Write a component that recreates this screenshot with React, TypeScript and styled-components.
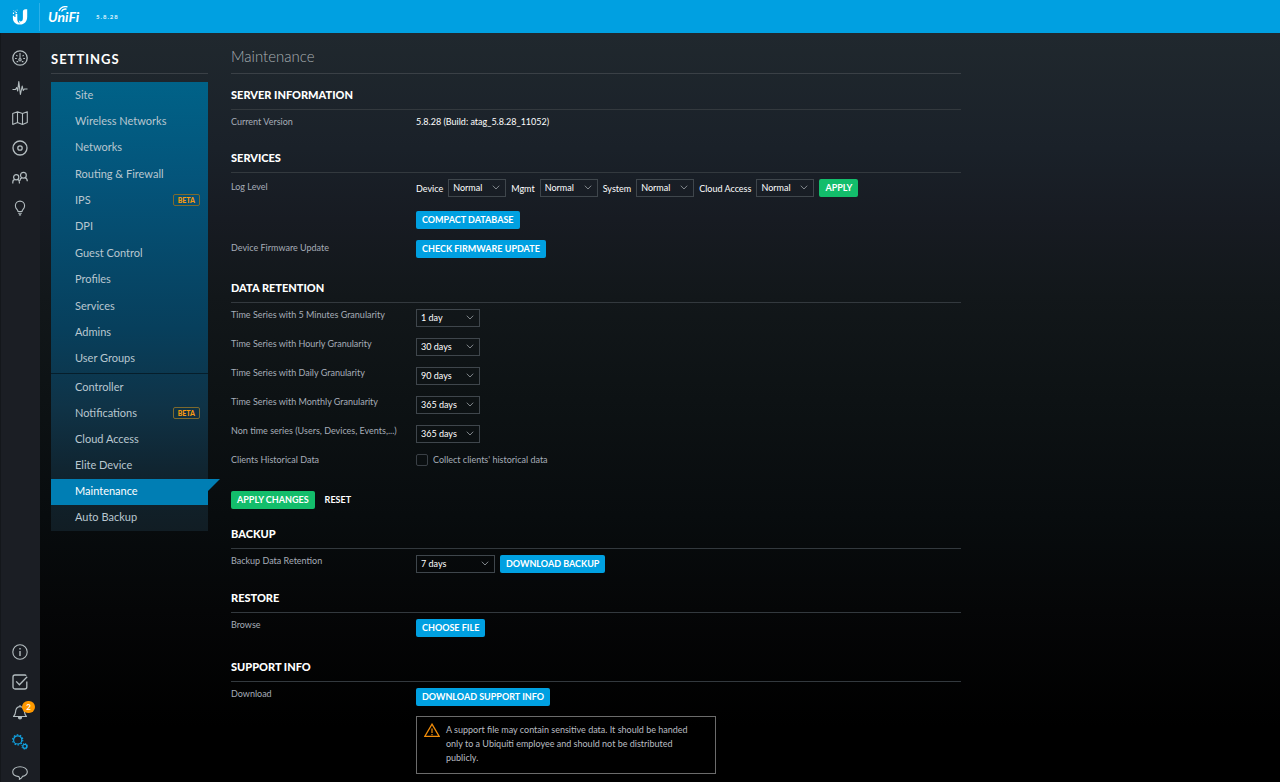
import React, { useState } from "react";
import styled, { createGlobalStyle, css } from "styled-components";

const GlobalStyle = createGlobalStyle`
  *, *::before, *::after { box-sizing: border-box; }
  html { background: #000; }
  body {
    margin: 0;
    color: #fff;
    font-family: Lato, "Open Sans", sans-serif;
    font-size: 9px;
    line-height: 12px;
  }
  h1, h2, p, ul { margin: 0; padding: 0; }
  ul { list-style: none; }
  button, select, input { font: inherit; color: inherit; margin: 0; }
`;

const Page = styled.div`
  display: flex;
  flex-direction: column;
  min-height: 100vh;
  background: linear-gradient(
    #20282e 33px,
    #1a2129 19%,
    #171b22 28%,
    #12171a 38%,
    #0d1214 51%,
    #080c0e 66%,
    #050607 78%,
    #000 93%
  );
`;

const TopBar = styled.header`
  display: flex;
  align-items: center;
  height: 33px;
  background: #00a0e1;
`;

const BrandLink = styled.a`
  display: flex;
  align-items: center;
  justify-content: center;
  width: 40px;
  height: 28px;
  border-right: 1px solid #2bb0e8;
`;

const ProductLogo = styled.svg`
  margin-left: 8px;
`;

const Version = styled.span`
  margin-left: 14px;
  font-size: 6px;
  font-weight: 900;
  letter-spacing: 1px;
  color: #d2edfa;
`;

const Body = styled.div`
  display: flex;
  flex: 1;
`;

const Rail = styled.nav`
  display: flex;
  flex-direction: column;
  justify-content: space-between;
  flex: none;
  width: 40px;
  padding-top: 15px;
  background: #1b1e24;
  box-shadow: inset 1px 0 #14171b;
`;

const RailGroup = styled.div`
  display: flex;
  flex-direction: column;
  align-items: center;
  gap: 10px;
`;

const RailButton = styled.button<{ $active?: boolean }>`
  position: relative;
  display: flex;
  align-items: center;
  justify-content: center;
  width: 30px;
  height: 20px;
  padding: 0;
  border: 0;
  background: none;
  color: ${(p) => (p.$active ? "#12a4e4" : "#b4bdc0")};
  cursor: pointer;
`;

const Badge = styled.span`
  position: absolute;
  top: -1px;
  right: 0;
  width: 13px;
  height: 12px;
  border-radius: 6px;
  background: #f90;
  color: #fff;
  font-size: 8px;
  font-weight: 700;
  line-height: 12px;
  text-align: center;
`;

const SettingsPanel = styled.aside`
  flex: none;
  width: 157px;
  margin: 0 23px 0 11px;
`;

const PanelTitle = styled.h2`
  height: 41px;
  margin-bottom: 8px;
  padding-top: 18px;
  border-bottom: 1px solid #3a4046;
  font-size: 13px;
  font-weight: 700;
  line-height: 16px;
  letter-spacing: 1px;
`;

const Menu = styled.div`
  display: flex;
  flex-direction: column;
  gap: 1px;
  background: linear-gradient(#006288, #04547a 22%, #073f5c 55%, #0f3347 72%, #10232e 88%, #111d24);
`;

const MenuGroup = styled.ul<{ $height: number }>`
  display: flex;
  flex-direction: column;
  height: ${(p) => p.$height}px;

  & + & {
    border-top: 1px solid #061e2b;
  }
`;

const MenuItem = styled.li`
  flex: 1;
  display: flex;
`;

const MenuLink = styled.a<{ $active: boolean }>`
  position: relative;
  flex: 1;
  display: flex;
  align-items: center;
  justify-content: space-between;
  padding: 0 8px 1px 24px;
  font-size: 11px;
  line-height: 14px;
  color: #b9c7d0;
  text-decoration: none;

  ${(p) =>
    p.$active &&
    css`
      background: #007eb4;
      color: #fff;

      &::after {
        content: "";
        position: absolute;
        top: 0;
        left: 100%;
        border-top: 12px solid #007eb4;
        border-right: 12px solid transparent;
      }
    `}
`;

const Beta = styled.span`
  padding: 0 4px;
  border: 1px solid #7d6a2e;
  border-radius: 2px;
  font-size: 7px;
  font-weight: 900;
  line-height: 10px;
  color: #f79a10;
`;

const Content = styled.main`
  flex: 1;
  max-width: 730px;
  padding-bottom: 8px;
`;

const Title = styled.h1`
  height: 41px;
  margin-bottom: 13px;
  padding-top: 13px;
  border-bottom: 1px solid #3a4046;
  font-size: 15px;
  font-weight: 300;
  line-height: 20px;
  color: #a9b0b3;
`;

const Section = styled.section<{ $gap?: number }>`
  margin-bottom: ${(p) => p.$gap ?? 22}px;
`;

const SectionTitle = styled.h2`
  padding-bottom: 6px;
  border-bottom: 1px solid #33393e;
  font-size: 11px;
  font-weight: 900;
  line-height: 16px;
`;

const Rows = styled.div`
  display: grid;
  row-gap: 11px;
  padding-top: 6px;
`;

const Row = styled.div`
  display: grid;
  grid-template-columns: 185px 1fr;
  align-items: start;
`;

const RowLabel = styled.label<{ $lowered?: boolean }>`
  padding-top: ${(p) => (p.$lowered ? 2 : 0)}px;
  color: #a6adb8;
`;

const Controls = styled.div`
  display: flex;
  align-items: center;
  gap: 5px;
`;

const Stack = styled.div`
  display: grid;
  justify-items: start;
  row-gap: 14px;
`;

const InlineLabel = styled.label`
  padding-top: 1px;
`;

const SelectBox = styled.span<{ $width: number }>`
  position: relative;
  display: block;
  width: ${(p) => p.$width}px;
  height: 18px;

  svg {
    position: absolute;
    top: 6px;
    right: 6px;
    pointer-events: none;
  }
`;

const NativeSelect = styled.select`
  appearance: none;
  display: block;
  width: 100%;
  height: 100%;
  padding: 0 16px 1px 4px;
  border: 1px solid #3f464c;
  border-radius: 0;
  background: transparent;
  outline: none;

  option { background: #171c21; }
`;

const Button = styled.button<{ $tone?: "blue" | "green" | "plain" }>`
  height: 18px;
  padding: 0 6px;
  border: 0;
  border-radius: 2px;
  background: ${(p) =>
    p.$tone === "green" ? "#13bd6b" : p.$tone === "plain" ? "none" : "#00a0e1"};
  color: #fff;
  font-size: 9px;
  font-weight: 700;
  line-height: 16px;
  white-space: nowrap;
  cursor: pointer;
`;

const Check = styled.label`
  display: flex;
  align-items: center;
  gap: 5px;
  color: #a6adb8;
`;

const CheckInput = styled.input`
  appearance: none;
  width: 12px;
  height: 12px;
  border: 1px solid #3a4046;
  border-radius: 2px;
`;

const FormActions = styled.div`
  display: flex;
  gap: 4px;
  padding-top: 25px;
`;

const Notice = styled.div`
  display: flex;
  gap: 6px;
  width: 300px;
  margin-top: 10px;
  padding: 6px 12px 8px 7px;
  border: 1px solid #6b6b6b;
  line-height: 14px;
  color: #b9bdc2;

  svg { flex: none; }
`;

const icon = {
  width: 16,
  height: 16,
  viewBox: "0 0 16 16",
  fill: "none",
  stroke: "currentColor",
  strokeWidth: 1.1,
  "aria-hidden": true,
} as const;

const GaugeIcon = () => (
  <svg {...icon}>
    <circle cx="8" cy="8" r="7.2" strokeWidth={1.3} />
    <circle cx="8" cy="9.8" r="1.2" />
    <path d="M8 8.6V3M3 8.5h1.8M11.2 8.5H13M4.3 5.2l1.2.9M11.7 5.2l-1.2.9M4.6 11.6h1.6M9.8 11.6h1.6" />
  </svg>
);

const PulseIcon = () => (
  <svg {...icon} strokeLinejoin="round">
    <path d="M.5 9.5h3l1.2-2 1 3.5L6.8 1.5l1.6 13L10.2 6l1 4.5L12.400 9h3.100" />
  </svg>
);

const MapIcon = () => (
  <svg {...icon} strokeLinejoin="round">
    <path d="M.7 3.4 5.5 1.8l5 1.8 4.8-1.8v10.800l-4.800 1.800-5-1.800-4.800 1.800zM5.500 1.800v10.800M10.500 3.600v10.800" />
  </svg>
);

const DeviceIcon = () => (
  <svg {...icon} strokeWidth={1.3}>
    <circle cx="8" cy="8" r="7" />
    <circle cx="8" cy="8" r="2.2" />
  </svg>
);

const ClientsIcon = () => (
  <svg {...icon} strokeWidth={1.2}>
    <circle cx="4.2" cy="7.2" r="2.6" />
    <circle cx="11.4" cy="5.2" r="2.9" />
    <path d="M.8 13.4v-1.2c0-1.6 1-2.6 2.2-2.8M5.6 9.4c1 .3 1.8 1.2 1.8 2.8v1.2M8 10.8c0-1.6.8-2.8 2-3.2M12.9 7.6c1.5.4 2.4 1.6 2.4 3.6" />
  </svg>
);

const BulbIcon = () => (
  <svg {...icon}>
    <path d="M6 11.5C6 9.5 3.4 9 3.4 5.7a4.6 4.6 0 0 1 9.2 0C12.6 9 10 9.5 10 11.5zM6.2 13.2h3.6M6.9 14.9h2.2" />
  </svg>
);

const InfoIcon = () => (
  <svg {...icon}>
    <circle cx="8" cy="8" r="7.2" />
    <path d="M8 7v5M8 4v1.6" strokeWidth={1.4} />
  </svg>
);

const TaskIcon = () => (
  <svg {...icon} strokeWidth={1.3}>
    <path d="M14.8 7.5V13a2 2 0 0 1-2 2H3a2 2 0 0 1-2-2V3a2 2 0 0 1 2-2h9.8c.6 0 1.1.2 1.5.6" />
    <path d="m4.2 7.4 3.2 3.4 7.8-8" />
  </svg>
);

const BellIcon = () => (
  <svg {...icon} strokeLinejoin="round">
    <path d="M1.5 12.5C3.8 10.8 3.3 8 3.9 5.9 4.5 3.8 6 2.6 8 2.6s3.5 1.2 4.1 3.3c.6 2.1.1 4.9 2.4 6.6zM8 1v1.6" />
    <path d="M6.5 13v.5a1.5 1.5 0 0 0 3 0V13" fill="currentColor" />
  </svg>
);

const GearsIcon = () => (
  <svg {...icon}>
    <circle cx="5.7" cy="5.9" r="4.1" strokeWidth={1.2} />
    <circle cx="5.7" cy="5.9" r="5.1" strokeDasharray="1.6 1.604" />
    <circle cx="12.8" cy="12.3" r="2" strokeWidth={1.2} />
    <circle cx="12.8" cy="12.3" r="2.9" strokeWidth={1} strokeDasharray="1.14 1.138" />
  </svg>
);

const ChatIcon = () => (
  <svg {...icon}>
    <path d="M6.8 12.6C3.3 12.2.7 10.2.7 7.7c0-2.8 3.3-5 7.3-5s7.3 2.2 7.3 5c0 2.2-2 4-4.8 4.7-.6 1.2-1.5 2.1-3 2.8.2-.9-.1-1.8-.7-2.6z" />
  </svg>
);

const WarningIcon = () => (
  <svg {...icon} stroke="#f08c0a" strokeWidth={1.3}>
    <path d="M8 1.2 15.2 13.4H.8z" />
    <path d="M8 5.4v4.5M8 10.9v1.3" strokeWidth={1.2} />
  </svg>
);

const Chevron = () => (
  <svg width="8" height="5" viewBox="0 0 8 5" fill="none" stroke="#8d9499" aria-hidden>
    <path d="m.8.7 3.2 3.3L7.2.7" strokeWidth=".9" />
  </svg>
);

const UbntMark = () => (
  <svg width="16" height="16" viewBox="0 0 16 16" fill="#fff" aria-hidden>
    <path d="M15.2.2v7.6c0 4.8-2.8 7.8-7.2 7.8S.9 13 .9 9V6.8h1.4v1.3h1.2V5h1.8v5.2c0 2.3 1.1 3.7 3.1 4.3-1-.8-1.5-1.9-1.5-3.6 0 0 .8 2 2.4 1.4 1.1-.4 1.6-1.5 1.6-3.6V2.6c0-1.4.9-2.4 2.600-2.400z" />
    <path d="M.9 3.600h1.200v1.300H.9zM2.700 1.700h.9v1h-.9zM3.600 3h1.300v1.200H3.600zM4.700.7h.8v.8h-.8zM1 .9h.7v.7H1z" />
  </svg>
);

const UnifiMark = () => (
  <ProductLogo width="34" height="22" viewBox="0 0 34 22" role="img" aria-label="UniFi">
    <text
      x="0"
      y="16"
      fill="#fff"
      fontFamily="Lato, sans-serif"
      fontSize="14"
      fontStyle="italic"
      fontWeight="700"
    >
      UniFi
    </text>
    <path
      d="M11 5C12.6 1.5 15.5 0 19.5.9M13.5 5.5c1-2 2.8-2.8 5-2.3"
      fill="none"
      stroke="#fff"
      strokeWidth="1.4"
    />
  </ProductLogo>
);

const primaryMenu = [
  "Site", "Wireless Networks", "Networks", "Routing & Firewall", "IPS", "DPI",
  "Guest Control", "Profiles", "Services", "Admins", "User Groups",
];
const secondaryMenu = [
  "Controller", "Notifications", "Cloud Access", "Elite Device", "Maintenance", "Auto Backup",
];
const betaItems = ["IPS", "Notifications"];

const logLevels = ["Device", "Mgmt", "System", "Cloud Access"];

const retention = [
  ["Time Series with 5 Minutes Granularity", "1 day"],
  ["Time Series with Hourly Granularity", "30 days"],
  ["Time Series with Daily Granularity", "90 days"],
  ["Time Series with Monthly Granularity", "365 days"],
  ["Non time series (Users, Devices, Events,...)", "365 days"],
];

function Select({ id, width, value }: { id: string; width: number; value: string }) {
  return (
    <SelectBox $width={width}>
      <NativeSelect id={id} defaultValue={value}>
        <option>{value}</option>
      </NativeSelect>
      <Chevron />
    </SelectBox>
  );
}

function MenuList({
  items, height, current, onSelect,
}: { items: string[]; height: number; current: string; onSelect: (name: string) => void }) {
  return (
    <MenuGroup $height={height}>
      {items.map((name) => (
        <MenuItem key={name}>
          <MenuLink
            href="#"
            $active={name === current}
            aria-current={name === current ? "page" : undefined}
            onClick={(e) => {
              e.preventDefault();
              onSelect(name);
            }}
          >
            {name}
            {betaItems.includes(name) && <Beta>BETA</Beta>}
          </MenuLink>
        </MenuItem>
      ))}
    </MenuGroup>
  );
}

export default function App() {
  const [current, setCurrent] = useState("Maintenance");

  return (
    <Page>
      <GlobalStyle />
      <TopBar>
        <BrandLink href="#" aria-label="Ubiquiti"><UbntMark /></BrandLink>
        <UnifiMark />
        <Version>5.8.28</Version>
      </TopBar>
      <Body>
        <Rail aria-label="Main">
          <RailGroup>
            <RailButton aria-label="Dashboard"><GaugeIcon /></RailButton>
            <RailButton aria-label="Statistics"><PulseIcon /></RailButton>
            <RailButton aria-label="Map"><MapIcon /></RailButton>
            <RailButton aria-label="Devices"><DeviceIcon /></RailButton>
            <RailButton aria-label="Clients"><ClientsIcon /></RailButton>
            <RailButton aria-label="Insights"><BulbIcon /></RailButton>
          </RailGroup>
          <RailGroup>
            <RailButton aria-label="Information"><InfoIcon /></RailButton>
            <RailButton aria-label="Events"><TaskIcon /></RailButton>
            <RailButton aria-label="Alerts"><BellIcon /><Badge>2</Badge></RailButton>
            <RailButton aria-label="Settings" $active><GearsIcon /></RailButton>
            <RailButton aria-label="Chat"><ChatIcon /></RailButton>
          </RailGroup>
        </Rail>

        <SettingsPanel>
          <PanelTitle>SETTINGS</PanelTitle>
          <Menu>
            <MenuList items={primaryMenu} height={290} current={current} onSelect={setCurrent} />
            <MenuList items={secondaryMenu} height={158} current={current} onSelect={setCurrent} />
          </Menu>
        </SettingsPanel>

        <Content>
          <Title>Maintenance</Title>

          <Section>
            <SectionTitle>SERVER INFORMATION</SectionTitle>
            <Rows>
              <Row>
                <RowLabel as="span">Current Version</RowLabel>
                <span>5.8.28 (Build: atag_5.8.28_11052)</span>
              </Row>
            </Rows>
          </Section>

          <Section>
            <SectionTitle>SERVICES</SectionTitle>
            <Rows>
              <Row>
                <RowLabel as="span" $lowered>Log Level</RowLabel>
                <Stack>
                  <Controls>
                    {logLevels.map((name) => (
                      <React.Fragment key={name}>
                        <InlineLabel htmlFor={`log-${name}`}>{name}</InlineLabel>
                        <Select id={`log-${name}`} width={58} value="Normal" />
                      </React.Fragment>
                    ))}
                    <Button $tone="green">APPLY</Button>
                  </Controls>
                  <Button>COMPACT DATABASE</Button>
                </Stack>
              </Row>
              <Row>
                <RowLabel as="span" $lowered>Device Firmware Update</RowLabel>
                <Controls><Button>CHECK FIRMWARE UPDATE</Button></Controls>
              </Row>
            </Rows>
          </Section>

          <Section $gap={17}>
            <SectionTitle>DATA RETENTION</SectionTitle>
            <Rows>
              {retention.map(([label, value], i) => (
                <Row key={label}>
                  <RowLabel htmlFor={`retention-${i}`}>{label}</RowLabel>
                  <Select id={`retention-${i}`} width={64} value={value} />
                </Row>
              ))}
              <Row>
                <RowLabel as="span">Clients Historical Data</RowLabel>
                <Check>
                  <CheckInput type="checkbox" />
                  Collect clients' historical data
                </Check>
              </Row>
            </Rows>
            <FormActions>
              <Button $tone="green">APPLY CHANGES</Button>
              <Button $tone="plain">RESET</Button>
            </FormActions>
          </Section>

          <Section $gap={17}>
            <SectionTitle>BACKUP</SectionTitle>
            <Rows>
              <Row>
                <RowLabel htmlFor="backup-retention">Backup Data Retention</RowLabel>
                <Controls>
                  <Select id="backup-retention" width={79} value="7 days" />
                  <Button>DOWNLOAD BACKUP</Button>
                </Controls>
              </Row>
            </Rows>
          </Section>

          <Section>
            <SectionTitle>RESTORE</SectionTitle>
            <Rows>
              <Row>
                <RowLabel as="span">Browse</RowLabel>
                <Controls><Button>CHOOSE FILE</Button></Controls>
              </Row>
            </Rows>
          </Section>

          <Section $gap={0}>
            <SectionTitle>SUPPORT INFO</SectionTitle>
            <Rows>
              <Row>
                <RowLabel as="span">Download</RowLabel>
                <div>
                  <Button>DOWNLOAD SUPPORT INFO</Button>
                  <Notice>
                    <WarningIcon />
                    <p>
                      A support file may contain sensitive data. It should be handed only to a
                      Ubiquiti employee and should not be distributed publicly.
                    </p>
                  </Notice>
                </div>
              </Row>
            </Rows>
          </Section>
        </Content>
      </Body>
    </Page>
  );
}
